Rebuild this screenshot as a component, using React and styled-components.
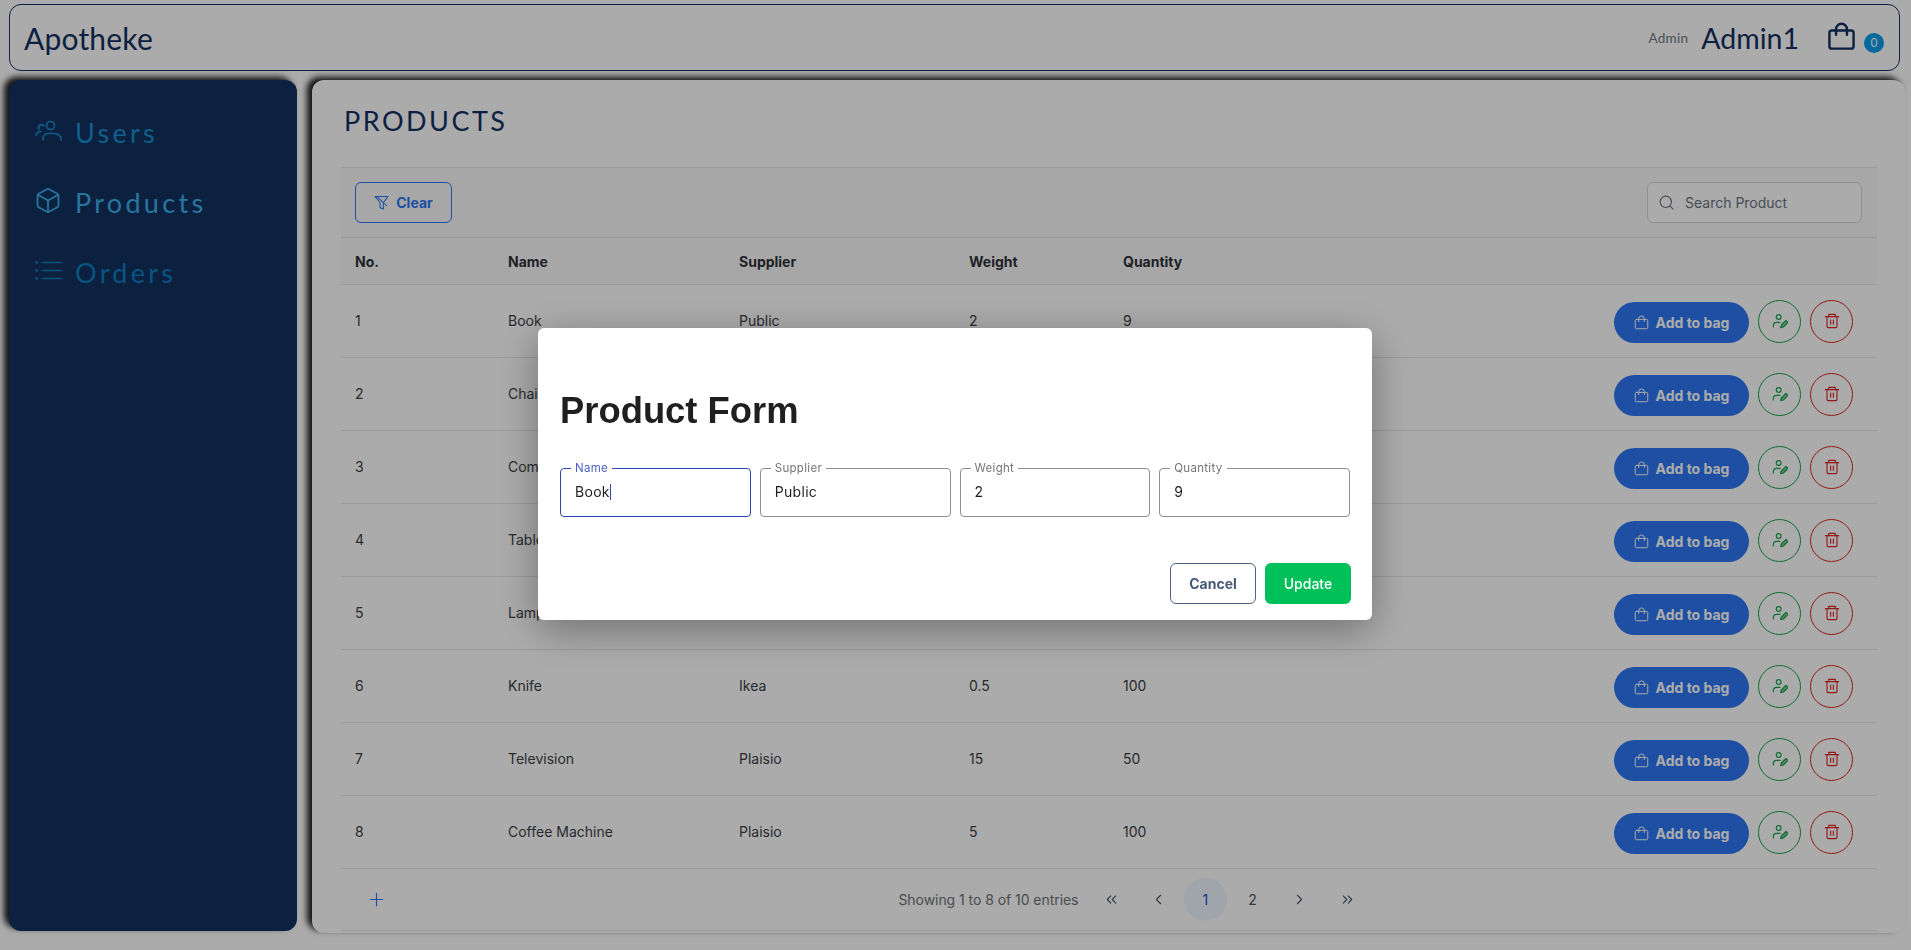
import React from 'react';
import styled, { createGlobalStyle } from 'styled-components';
import { Box, Search, Plus, ChevronsLeft, ChevronLeft, ChevronRight, ChevronsRight } from 'lucide-react';

const GlobalStyle = createGlobalStyle`
  html, body { margin: 0; padding: 0; background: #ffffff; }
  * { box-sizing: border-box; }
  body { font-family: Inter, "Liberation Sans", sans-serif; overflow: hidden; }
`;

const Page = styled.div`
  height: 950px;
  display: flex;
  flex-direction: column;
  padding: 4px 6px 17px 9px;
`;

const TopBar = styled.header`
  height: 67px;
  margin-right: 5px;
  border: 1px solid #123061;
  border-radius: 12px;
  display: flex;
  align-items: center;
  padding: 0 15px 0 14px;
  color: #123061;
`;

const Logo = styled.div`
  font-family: Lato, sans-serif;
  font-size: 30px;
  letter-spacing: 0.2px;
  flex: 1;
`;

const Role = styled.span`
  font-family: Lato, sans-serif;
  font-size: 13.5px;
  color: #6f7886;
  letter-spacing: 0.3px;
`;

const UserName = styled.span`
  font-family: Lato, sans-serif;
  font-size: 28.5px;
  margin-left: 13px;
`;

const BagLink = styled.div`
  position: relative;
  margin-left: 28px;
  width: 57px;
  height: 32px;
  color: #123061;
`;

const Badge = styled.span`
  position: absolute;
  left: 37px;
  top: 11px;
  width: 20px;
  height: 20px;
  border-radius: 50%;
  background: #0a9bea;
  color: #ffffff;
  font-size: 12px;
  display: flex;
  align-items: center;
  justify-content: center;
`;

const Body = styled.div`
  flex: 1;
  display: flex;
  gap: 15px;
  margin-top: 9px;
  min-height: 0;
`;

const Sidebar = styled.nav`
  width: 288px;
  margin-bottom: 2px;
  background: #12305f;
  border-radius: 12px;
  box-shadow: -5px -3px 6px rgba(0, 0, 0, 0.9);
  padding: 17px 0 0 27px;
`;

const NavItem = styled.div`
  height: 70px;
  display: flex;
  align-items: center;
  gap: 13px;
  font-family: Lato, sans-serif;
  font-size: 27px;
  letter-spacing: 3.3px;
  color: ${p => p.$color};
`;

const NavIcon = styled.span`
  width: 28px;
  margin-left: -2px;
  margin-top: -3px;
  display: flex;
  align-items: center;
  justify-content: center;
`;

const Main = styled.main`
  flex: 1;
  background: #ffffff;
  border-radius: 12px;
  box-shadow: -5px -3px 6px rgba(0, 0, 0, 0.9);
  padding: 0 28px 0 29px;
  display: flex;
  flex-direction: column;
`;

const Title = styled.h1`
  margin: 0;
  height: 87px;
  padding: 24px 0 0 3px;
  font-family: Lato, sans-serif;
  font-weight: 400;
  font-size: 27px;
  letter-spacing: 2.5px;
  color: #123061;
`;

const Toolbar = styled.div`
  height: 71px;
  background: #f9fafb;
  border-top: 1px solid #e5e7eb;
  border-bottom: 1px solid #e5e7eb;
  display: flex;
  align-items: center;
  justify-content: space-between;
  padding: 0 15px 0 14px;
`;

const ClearButton = styled.button`
  width: 97px;
  height: 41px;
  border: 1px solid #2d77f3;
  border-radius: 6px;
  background: transparent;
  color: #2d77f3;
  font: 700 14px Inter, sans-serif;
  display: flex;
  align-items: center;
  justify-content: center;
  gap: 7px;
`;

const SearchBox = styled.div`
  width: 215px;
  height: 41px;
  border: 1px solid #d1d5db;
  border-radius: 6px;
  background: #ffffff;
  display: flex;
  align-items: center;
  gap: 10px;
  padding: 0 10px;
  color: #6b7280;
  font-size: 14px;
`;

const TableRow = styled.div`
  display: grid;
  grid-template-columns: 153px 231px 230px 154px 1fr auto;
  align-items: center;
  padding: 0 24px 0 14px;
  height: ${p => (p.$head ? '47px' : '73px')};
  border-bottom: 1px solid #e5e7eb;
  background: ${p => (p.$head ? '#f9fafb' : '#ffffff')};
  color: ${p => (p.$head ? '#2f3237' : '#3d4045')};
  font-size: 14px;
  font-weight: ${p => (p.$head ? 700 : 400)};
`;

const Cell = styled.span`
  margin-top: -2px;
`;

const Actions = styled.div`
  display: flex;
  align-items: center;
  gap: 9px;
`;

const AddButton = styled.button`
  width: 135px;
  height: 41px;
  margin-top: 2px;
  border: none;
  border-radius: 21px;
  background: #2d77f3;
  color: #ffffff;
  font: 700 14px Inter, sans-serif;
  display: flex;
  align-items: center;
  justify-content: center;
  gap: 7px;
`;

const RoundButton = styled.button`
  width: 43px;
  height: 43px;
  padding: 0;
  border-radius: 50%;
  border: 1px solid ${p => p.$color};
  background: transparent;
  color: ${p => p.$color};
  display: flex;
  align-items: center;
  justify-content: center;
`;

const Footer = styled.div`
  height: 62px;
  border-bottom: 1px solid #e5e7eb;
  display: flex;
  align-items: center;
  padding: 0 14px;
  color: #6f7278;
  font-size: 14px;
`;

const AddRow = styled.div`
  width: 43px;
  height: 43px;
  margin-right: 8px;
  color: #2d77f3;
  display: flex;
  align-items: center;
  justify-content: center;
`;

const Showing = styled.span`
  margin-left: auto;
  margin-right: 9px;
  letter-spacing: -0.05px;
`;

const PageBtn = styled.div`
  width: 43px;
  height: 43px;
  margin: 0 2.1px;
  border-radius: 50%;
  display: flex;
  align-items: center;
  justify-content: center;
  background: ${p => (p.$active ? '#eff6ff' : 'transparent')};
  color: ${p => (p.$active ? '#1d4ed8' : '#4b5563')};
`;

const FooterEnd = styled.div`
  margin-left: auto;
`;

const Overlay = styled.div`
  position: fixed;
  inset: 0;
  padding: 0 1px 2px 0;
  background: rgba(0, 0, 0, 0.33);
  display: flex;
  align-items: center;
  justify-content: center;
`;

const Modal = styled.div`
  width: 834px;
  height: 292px;
  background: #ffffff;
  border-radius: 6px;
  box-shadow: 0 10px 40px rgba(0, 0, 0, 0.35);
  padding: 0 22px;
  display: flex;
  flex-direction: column;
`;

const ModalTitle = styled.h2`
  margin: 0;
  height: 140px;
  padding-top: 62px;
  font: 700 36.4px "Liberation Sans", sans-serif;
  color: #1f1f1f;
`;

const Fields = styled.div`
  display: grid;
  grid-template-columns: repeat(4, 1fr);
  gap: 9px;
`;

const Field = styled.div`
  position: relative;
  height: 49px;
  border: 1px solid ${p => (p.$focus ? '#2f45b5' : '#8f8f8f')};
  border-radius: 4px;
  padding: 0 14px 2px;
  display: flex;
  align-items: center;
  font-size: 14px;
  letter-spacing: 0.3px;
  color: #1f1f1f;
`;

const FieldLabel = styled.label`
  position: absolute;
  left: 10px;
  top: -7px;
  padding: 0 4px;
  background: #ffffff;
  font-size: 11.5px;
  line-height: 12px;
  color: ${p => (p.$focus ? '#4f61c8' : '#757575')};
`;

const Caret = styled.span`
  display: inline-block;
  width: 1px;
  height: 16px;
  background: #2f45b5;
`;

const ModalActions = styled.div`
  margin-top: 46px;
  margin-right: -1px;
  display: flex;
  justify-content: flex-end;
  gap: 9px;
`;

const CancelButton = styled.button`
  width: 86px;
  height: 41px;
  border: 1px solid #4f6380;
  border-radius: 6px;
  background: #ffffff;
  color: #475a76;
  font: 700 14px Inter, sans-serif;
`;

const UpdateButton = styled.button`
  width: 86px;
  height: 41px;
  border: none;
  border-radius: 6px;
  background: #00c05a;
  color: #ffffff;
  font: 500 14px Inter, sans-serif;
`;

const BagIcon = ({ size, weight = 1.8 }) => (
  <svg width={size} height={size} viewBox="0 0 24 24" fill="none" stroke="currentColor" strokeWidth={weight} strokeLinecap="round" strokeLinejoin="round">
    <rect x="2" y="7" width="20" height="15" rx="2" />
    <path d="M7.5 10.5V6a4.5 4.5 0 0 1 9 0v4.5" />
  </svg>
);

const UsersIcon = () => (
  <svg width="27" height="21" viewBox="0 0 27 21" fill="none" stroke="currentColor" strokeWidth="1.6" strokeLinecap="round">
    <circle cx="15.5" cy="5.5" r="4" />
    <path d="M8 20v-1.5a5 5 0 0 1 5-5h5.5a7 5.5 0 0 1 7.5 6.5" />
    <path d="M4 9.5a3 3 0 0 1 5-3.5" />
    <path d="M1 15a5 5 0 0 1 5-3.5" />
  </svg>
);

const ListIcon = () => (
  <svg width="27" height="19" viewBox="0 0 27 19" fill="none" stroke="currentColor" strokeWidth="1.7" strokeLinecap="round">
    <path d="M7.5 1.5h18.5M7.5 9.5h18.5M7.5 17.5h18.5" />
    <path d="M1.5 1.5h.5M1.5 9.5h.5M1.5 17.5h.5" strokeWidth="2.6" />
  </svg>
);

const FilterSlash = () => (
  <svg width="15" height="15" viewBox="0 0 16 16" fill="none" stroke="currentColor" strokeWidth="1.1" strokeLinejoin="round">
    <path d="M1 1.5h14l-5 6.5v7l-3.5-1.5V8z" />
    <path d="M3 1.5L14 12" />
  </svg>
);

const UserEdit = () => (
  <svg width="16" height="16" viewBox="0 0 24 24" fill="none" stroke="currentColor" strokeWidth="1.7" strokeLinecap="round" strokeLinejoin="round">
    <circle cx="10" cy="6" r="3.6" />
    <path d="M2 21v-2a5 5 0 0 1 5-5h5" />
    <path d="M13 22l1-4 7-7 3 3-7 7z" fill="currentColor" fillOpacity="0.55" />
  </svg>
);

const TrashIcon = () => (
  <svg width="16" height="16" viewBox="0 0 24 24" fill="none" stroke="currentColor" strokeWidth="1.7" strokeLinecap="round" strokeLinejoin="round">
    <path d="M2 5.5h20" />
    <path d="M7 5.5V2h10v3.5" />
    <path d="M4.5 5.5V20a2 2 0 0 0 2 2h11a2 2 0 0 0 2-2V5.5" />
    <path d="M10 10.5v6.5M14 10.5v6.5" />
  </svg>
);

const products = [
  ['1', 'Book', 'Public', '2', '9'],
  ['2', 'Chair', 'Ikea', '10', '20'],
  ['3', 'Computer', 'Plaisio', '3', '15'],
  ['4', 'Table', 'Ikea', '20', '10'],
  ['5', 'Lamp', 'Ikea', '1', '40'],
  ['6', 'Knife', 'Ikea', '0.5', '100'],
  ['7', 'Television', 'Plaisio', '15', '50'],
  ['8', 'Coffee Machine', 'Plaisio', '5', '100'],
];

const fields = [
  { label: 'Name', value: 'Book', focus: true },
  { label: 'Supplier', value: 'Public' },
  { label: 'Weight', value: '2' },
  { label: 'Quantity', value: '9' },
];

const App = () => {
  return (
    <>
      <GlobalStyle />
      <Page>
        <TopBar>
          <Logo>Apotheke</Logo>
          <Role>Admin</Role>
          <UserName>Admin1</UserName>
          <BagLink>
            <BagIcon size={29} weight={2} />
            <Badge>0</Badge>
          </BagLink>
        </TopBar>
        <Body>
          <Sidebar>
            <NavItem $color="#1a8ecf"><NavIcon><UsersIcon /></NavIcon>Users</NavItem>
            <NavItem $color="#3db0ea"><NavIcon><Box size={33} strokeWidth={1.5} /></NavIcon>Products</NavItem>
            <NavItem $color="#0c7fc0"><NavIcon><ListIcon /></NavIcon>Orders</NavItem>
          </Sidebar>
          <Main>
            <Title>PRODUCTS</Title>
            <Toolbar>
              <ClearButton><FilterSlash />Clear</ClearButton>
              <SearchBox><Search size={17} strokeWidth={1.6} />Search Product</SearchBox>
            </Toolbar>
            <TableRow $head>
              <span>No.</span>
              <span>Name</span>
              <span>Supplier</span>
              <span>Weight</span>
              <span>Quantity</span>
            </TableRow>
            {products.map(row => (
              <TableRow key={row[0]}>
                {row.map((cell, i) => <Cell key={i}>{cell}</Cell>)}
                <Actions>
                  <AddButton><BagIcon size={15} weight={1.6} />Add to bag</AddButton>
                  <RoundButton $color="#16a34a"><UserEdit /></RoundButton>
                  <RoundButton $color="#dc2626"><TrashIcon /></RoundButton>
                </Actions>
              </TableRow>
            ))}
            <Footer>
              <AddRow><Plus size={21} strokeWidth={1.3} /></AddRow>
              <Showing>Showing 1 to 8 of 10 entries</Showing>
              <PageBtn><ChevronsLeft size={17} strokeWidth={1.6} /></PageBtn>
              <PageBtn><ChevronLeft size={17} strokeWidth={1.6} /></PageBtn>
              <PageBtn $active>1</PageBtn>
              <PageBtn>2</PageBtn>
              <PageBtn><ChevronRight size={17} strokeWidth={1.6} /></PageBtn>
              <PageBtn><ChevronsRight size={17} strokeWidth={1.6} /></PageBtn>
              <FooterEnd />
            </Footer>
          </Main>
        </Body>
      </Page>
      <Overlay>
        <Modal>
          <ModalTitle>Product Form</ModalTitle>
          <Fields>
            {fields.map(f => (
              <Field key={f.label} $focus={f.focus}>
                <FieldLabel $focus={f.focus}>{f.label}</FieldLabel>
                {f.value}
                {f.focus && <Caret />}
              </Field>
            ))}
          </Fields>
          <ModalActions>
            <CancelButton>Cancel</CancelButton>
            <UpdateButton>Update</UpdateButton>
          </ModalActions>
        </Modal>
      </Overlay>
    </>
  );
};

export default App;
